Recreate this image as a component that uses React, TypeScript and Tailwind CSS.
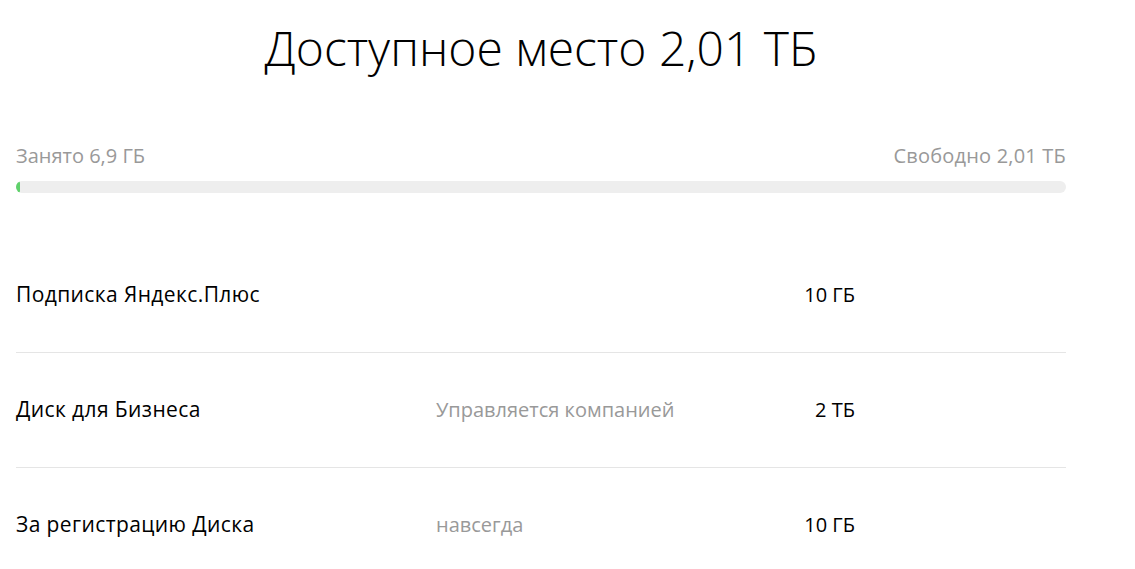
import React from 'react';

const rows = [
  { title: 'Подписка Яндекс.Плюс', note: '', size: '10 ГБ' },
  { title: 'Диск для Бизнеса', note: 'Управляется компанией', size: '2 ТБ' },
  { title: 'За регистрацию Диска', note: 'навсегда', size: '10 ГБ' },
];

export default function App() {
  return (
    <div className="min-h-screen bg-white font-['Open_Sans',sans-serif] text-black">
      <div className="w-[1050px] ml-4">
        <h1 className="pt-[20px] text-center text-[48px] font-light leading-[56px]">
          Доступное место 2,01 ТБ
        </h1>

        <div className="mt-[68px] flex justify-between text-[20px] leading-6 text-[#999]">
          <span>Занято 6,9 ГБ</span>
          <span className="tracking-[0.2px]">Свободно 2,01 ТБ</span>
        </div>
        <div className="mt-[13px] h-[12px] rounded-full bg-[#eeeeee] overflow-hidden">
          <div className="h-full w-[4px] rounded-full bg-[#5fd16b]" />
        </div>

        <div className="mt-[45px]">
          {rows.map((r) => (
            <div key={r.title} className="flex h-[115px] items-center border-b border-[#e5e5e5] text-[20px]">
              <div className="w-[420px] text-[21px] tracking-[0.4px]">{r.title}</div>
              <div className="w-[320px] text-[#999]">{r.note}</div>
              <div className="w-[99px] text-right">{r.size}</div>
            </div>
          ))}
        </div>
      </div>
    </div>
  );
}
